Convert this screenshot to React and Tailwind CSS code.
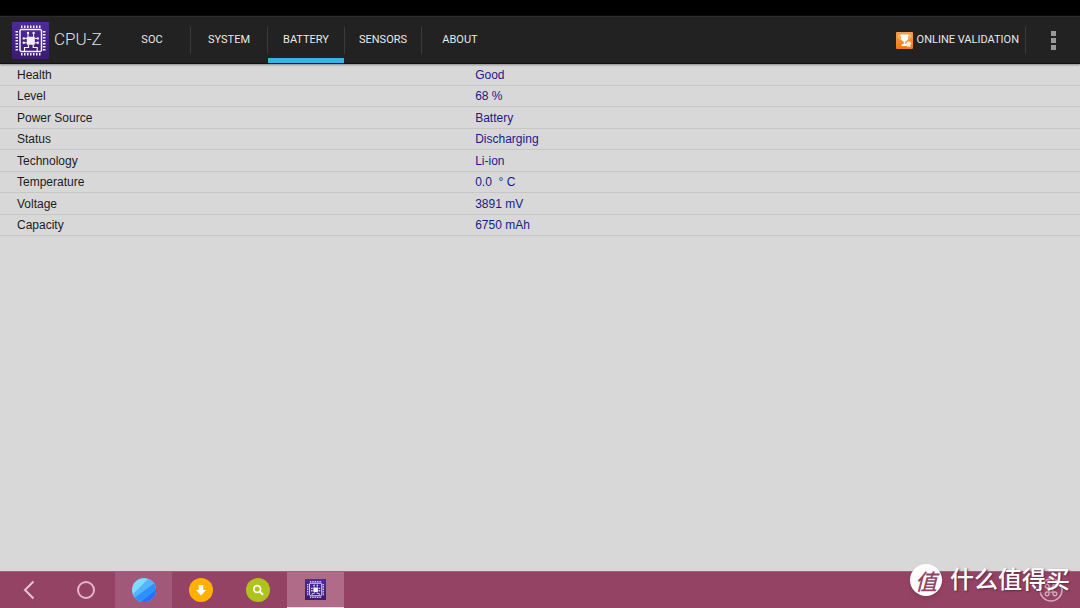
import React from 'react';

const tabs = ['SOC', 'SYSTEM', 'BATTERY', 'SENSORS', 'ABOUT'];

const batteryInfo = [
  { label: 'Health', value: 'Good' },
  { label: 'Level', value: '68 %' },
  { label: 'Power Source', value: 'Battery' },
  { label: 'Status', value: 'Discharging' },
  { label: 'Technology', value: 'Li-ion' },
  { label: 'Temperature', value: '0.0  ° C' },
  { label: 'Voltage', value: '3891 mV' },
  { label: 'Capacity', value: '6750 mAh' },
];

const pins = [8, 11, 14, 17, 20, 23, 26];

const ChipIcon = ({ className }) => (
  <svg viewBox="0 0 37 37" className={className} aria-hidden="true">
    <defs>
      <linearGradient id="chip" x1="0" y1="0" x2="0" y2="1">
        <stop offset="0" stopColor="#4f2a9c" />
        <stop offset="1" stopColor="#3b1a70" />
      </linearGradient>
    </defs>
    <rect width="37" height="37" fill="url(#chip)" />
    <g fill="#f4f0fb">
      {pins.map((p) => (
        <g key={p}>
          <rect x={p + 1} y="3.5" width="1.5" height="2.5" />
          <rect x={p + 1} y="31" width="1.5" height="2.5" />
          <rect x="3.5" y={p + 1} width="2.5" height="1.5" />
          <rect x="31" y={p + 1} width="2.5" height="1.5" />
        </g>
      ))}
      <rect x="14.8" y="14.8" width="8" height="8" rx="0.5" />
      <circle cx="16" cy="11" r="1.2" />
      <circle cx="21.6" cy="11" r="1.2" />
      <circle cx="11.8" cy="16.4" r="1.2" />
      <circle cx="11.8" cy="20.8" r="1.2" />
      <circle cx="25.8" cy="16.4" r="1.2" />
      <circle cx="25.8" cy="20.8" r="1.2" />
    </g>
    <g fill="none" stroke="#f4f0fb">
      <path strokeWidth="1.5" d="M9 7.5h19.5l1 1v20l-1 1H9l-1-1v-20z" />
      <path strokeWidth="1" d="M16 11v4M21.600 11v4M12 16.400h3M12 20.800h3M22.500 16.400h3M22.500 20.800h3" />
      <path strokeWidth="1.200" d="M12.500 29v-3.500h4v-3M25.200 29v-3.500h-4v-3" />
    </g>
  </svg>
);

const TrophyIcon = () => (
  <svg viewBox="0 0 17 17" className="size-[17px]" aria-hidden="true">
    <defs>
      <linearGradient id="trophy" x1="0" y1="0" x2="0" y2="1">
        <stop offset="0" stopColor="#f4a04c" />
        <stop offset="1" stopColor="#f47a0c" />
      </linearGradient>
    </defs>
    <rect width="17" height="17" rx="1" fill="url(#trophy)" />
    <path d="M5 3.500H2.500c0 2.500 1 4 3.500 4M12 3.500h2.500c0 2.500-1 4-3.500 4" fill="none" stroke="#fbd3a8" strokeWidth="0.8" />
    <path d="M4.500 2.500h8c0 3.500-1 6.500-3.200 7.200v2.300h1.700v2H5.500v-1.300l2.200-1V9.700C5.500 9 4.500 6 4.500 2.500z" fill="#fff" />
    <circle cx="12.700" cy="11.600" r="2.400" fill="#fdeedd" />
    <path d="M11.500 13l-.5 2.200 1.700-.8 1.800.8-.5-2.200z" fill="#fdeedd" />
  </svg>
);

const BrowserIcon = () => (
  <svg viewBox="0 0 24 24" className="size-6" aria-hidden="true">
    <clipPath id="ball">
      <circle cx="12" cy="12" r="12" />
    </clipPath>
    <g clipPath="url(#ball)">
      <rect width="24" height="24" fill="#7ddcff" />
      <path d="M0 17L17 0h7v24H0z" fill="#55b5fb" />
      <path d="M0 21.500L24 4v20H0z" fill="#2e91fb" />
      <path d="M9 24L24 12v12z" fill="#2b6df8" />
    </g>
  </svg>
);

const DownloadIcon = () => (
  <svg viewBox="0 0 24 24" className="size-6" aria-hidden="true">
    <circle cx="12" cy="12" r="12" fill="#ffb000" />
    <path d="M9.700 7h4.600v5h2.700l-5 5.500L7 12h2.700z" fill="#fff" />
  </svg>
);

const SearchIcon = () => (
  <svg viewBox="0 0 24 24" className="size-6" aria-hidden="true">
    <circle cx="12" cy="12" r="12" fill="#b0c21c" />
    <circle cx="11.200" cy="11" r="3.400" fill="none" stroke="#fff" strokeWidth="1.700" />
    <path d="M13.700 13.500l3.300 3.300" stroke="#fff" strokeWidth="2" />
  </svg>
);

const CommandIcon = () => (
  <svg viewBox="0 0 24 24" className="size-6" fill="none" stroke="#d5a9bb" aria-hidden="true">
    <circle cx="12" cy="12" r="11" strokeWidth="1.500" />
    <path
      strokeWidth="1.400"
      d="M10 10h4v4h-4zM10 10H8.200A1.900 1.900 0 1 1 10 8.200zM14 10V8.200A1.900 1.900 0 1 1 15.800 10zM14 14h1.800A1.900 1.900 0 1 1 14 15.800zM10 14v1.800A1.900 1.900 0 1 1 8.200 14z"
    />
  </svg>
);

const Header = () => (
  <header className="flex h-12 items-center border-t border-b border-t-[#2b2b2b] border-b-[#111] bg-[#222] font-[Roboto,sans-serif] text-[#e8e8e8] shadow-[0_1px_2px_#888]">
    <div className="flex w-[114px] shrink-0 items-center gap-[5px] pl-3">
      <ChipIcon className="size-[37px]" />
      <h1 className="text-[17px] font-light text-[#e0e0e0]">CPU-Z</h1>
    </div>
    <nav className="flex h-full">
      {tabs.map((tab, i) => (
        <div key={tab} className="flex items-center">
          {i > 0 && <span className="h-[27px] w-px bg-[#3a3a3a]" />}
          <button
            type="button"
            className={`h-full w-[76px] border-b-[5px] pt-1.5 text-[11px] ${tab === 'BATTERY' ? 'border-[#33b5e5]' : 'border-transparent'}`}
          >
            {tab}
          </button>
        </div>
      ))}
    </nav>
    <button type="button" className="ml-auto flex items-center gap-1 pr-1.5 text-[11px]">
      <TrophyIcon />
      ONLINE VALIDATION
    </button>
    <span className="h-[27px] w-px bg-[#3a3a3a]" />
    <button type="button" aria-label="More options" className="flex h-full w-[54px] flex-col items-center justify-center gap-0.5">
      <span className="size-[5px] bg-[#999]" />
      <span className="size-[5px] bg-[#999]" />
      <span className="size-[5px] bg-[#999]" />
    </button>
  </header>
);

const Taskbar = () => (
  <footer className="flex h-[37px] items-stretch border-t border-[#a0607c] bg-[#954365]">
    <button type="button" aria-label="Back" className="flex w-[57px] items-center justify-center">
      <svg viewBox="0 0 20 20" className="size-5" fill="none" stroke="#e6c4d2" strokeWidth="2">
        <path d="M14.500 1.500L6 10l8.500 8.500" />
      </svg>
    </button>
    <button type="button" aria-label="Home" className="flex w-[58px] items-center justify-center">
      <span className="size-[18px] rounded-full border-2 border-[#e0b8c8]" />
    </button>
    <button type="button" aria-label="Browser" className="flex w-[57px] items-center justify-center bg-[#a25878]">
      <BrowserIcon />
    </button>
    <button type="button" aria-label="Downloads" className="flex w-[57px] items-center justify-center">
      <DownloadIcon />
    </button>
    <button type="button" aria-label="Search" className="flex w-[58px] items-center justify-center">
      <SearchIcon />
    </button>
    <button type="button" aria-label="CPU-Z" className="flex w-[57px] items-center justify-center border-b border-[#f0dde5] bg-[#af6b88]">
      <ChipIcon className="size-[21px]" />
    </button>
    <button type="button" aria-label="Shortcuts" className="ml-auto flex items-center pr-[17px]">
      <CommandIcon />
    </button>
  </footer>
);

const App = () => {
  return (
    <div className="relative flex min-h-screen flex-col bg-[#d8d8d8] font-['Liberation_Sans',Arial,sans-serif]">
      <div className="h-4 bg-black" />
      <Header />
      <main className="flex-1">
        <table className="w-full table-fixed border-separate border-spacing-0 text-xs leading-4">
          <tbody>
            {batteryInfo.map((row) => (
              <tr key={row.label} className="odd:h-[22px] even:h-[21px]">
                <th scope="row" className="w-[44%] border-b border-[#c6c6c6] p-0 pl-[17px] text-left font-normal text-[#1c1c1c]">
                  {row.label}
                </th>
                <td className="border-b border-[#c6c6c6] p-0 whitespace-pre text-[#1a1a8c]">{row.value}</td>
              </tr>
            ))}
          </tbody>
        </table>
      </main>
      <Taskbar />

      {/* logo over the bottom right corner */}
      <div className="absolute right-2.5 bottom-2.5 flex items-center gap-2 font-['Noto_Sans_CJK_SC',sans-serif] text-white">
        <span className="flex size-8 items-center justify-center rounded-full bg-white text-[22px] leading-8 font-medium text-[#954365] italic shadow-md">值</span>
        <span className="pb-1 text-2xl leading-8 font-medium [text-shadow:1px_1px_2px_#5a2a40]">什么值得买</span>
      </div>
    </div>
  );
};

export default App;
